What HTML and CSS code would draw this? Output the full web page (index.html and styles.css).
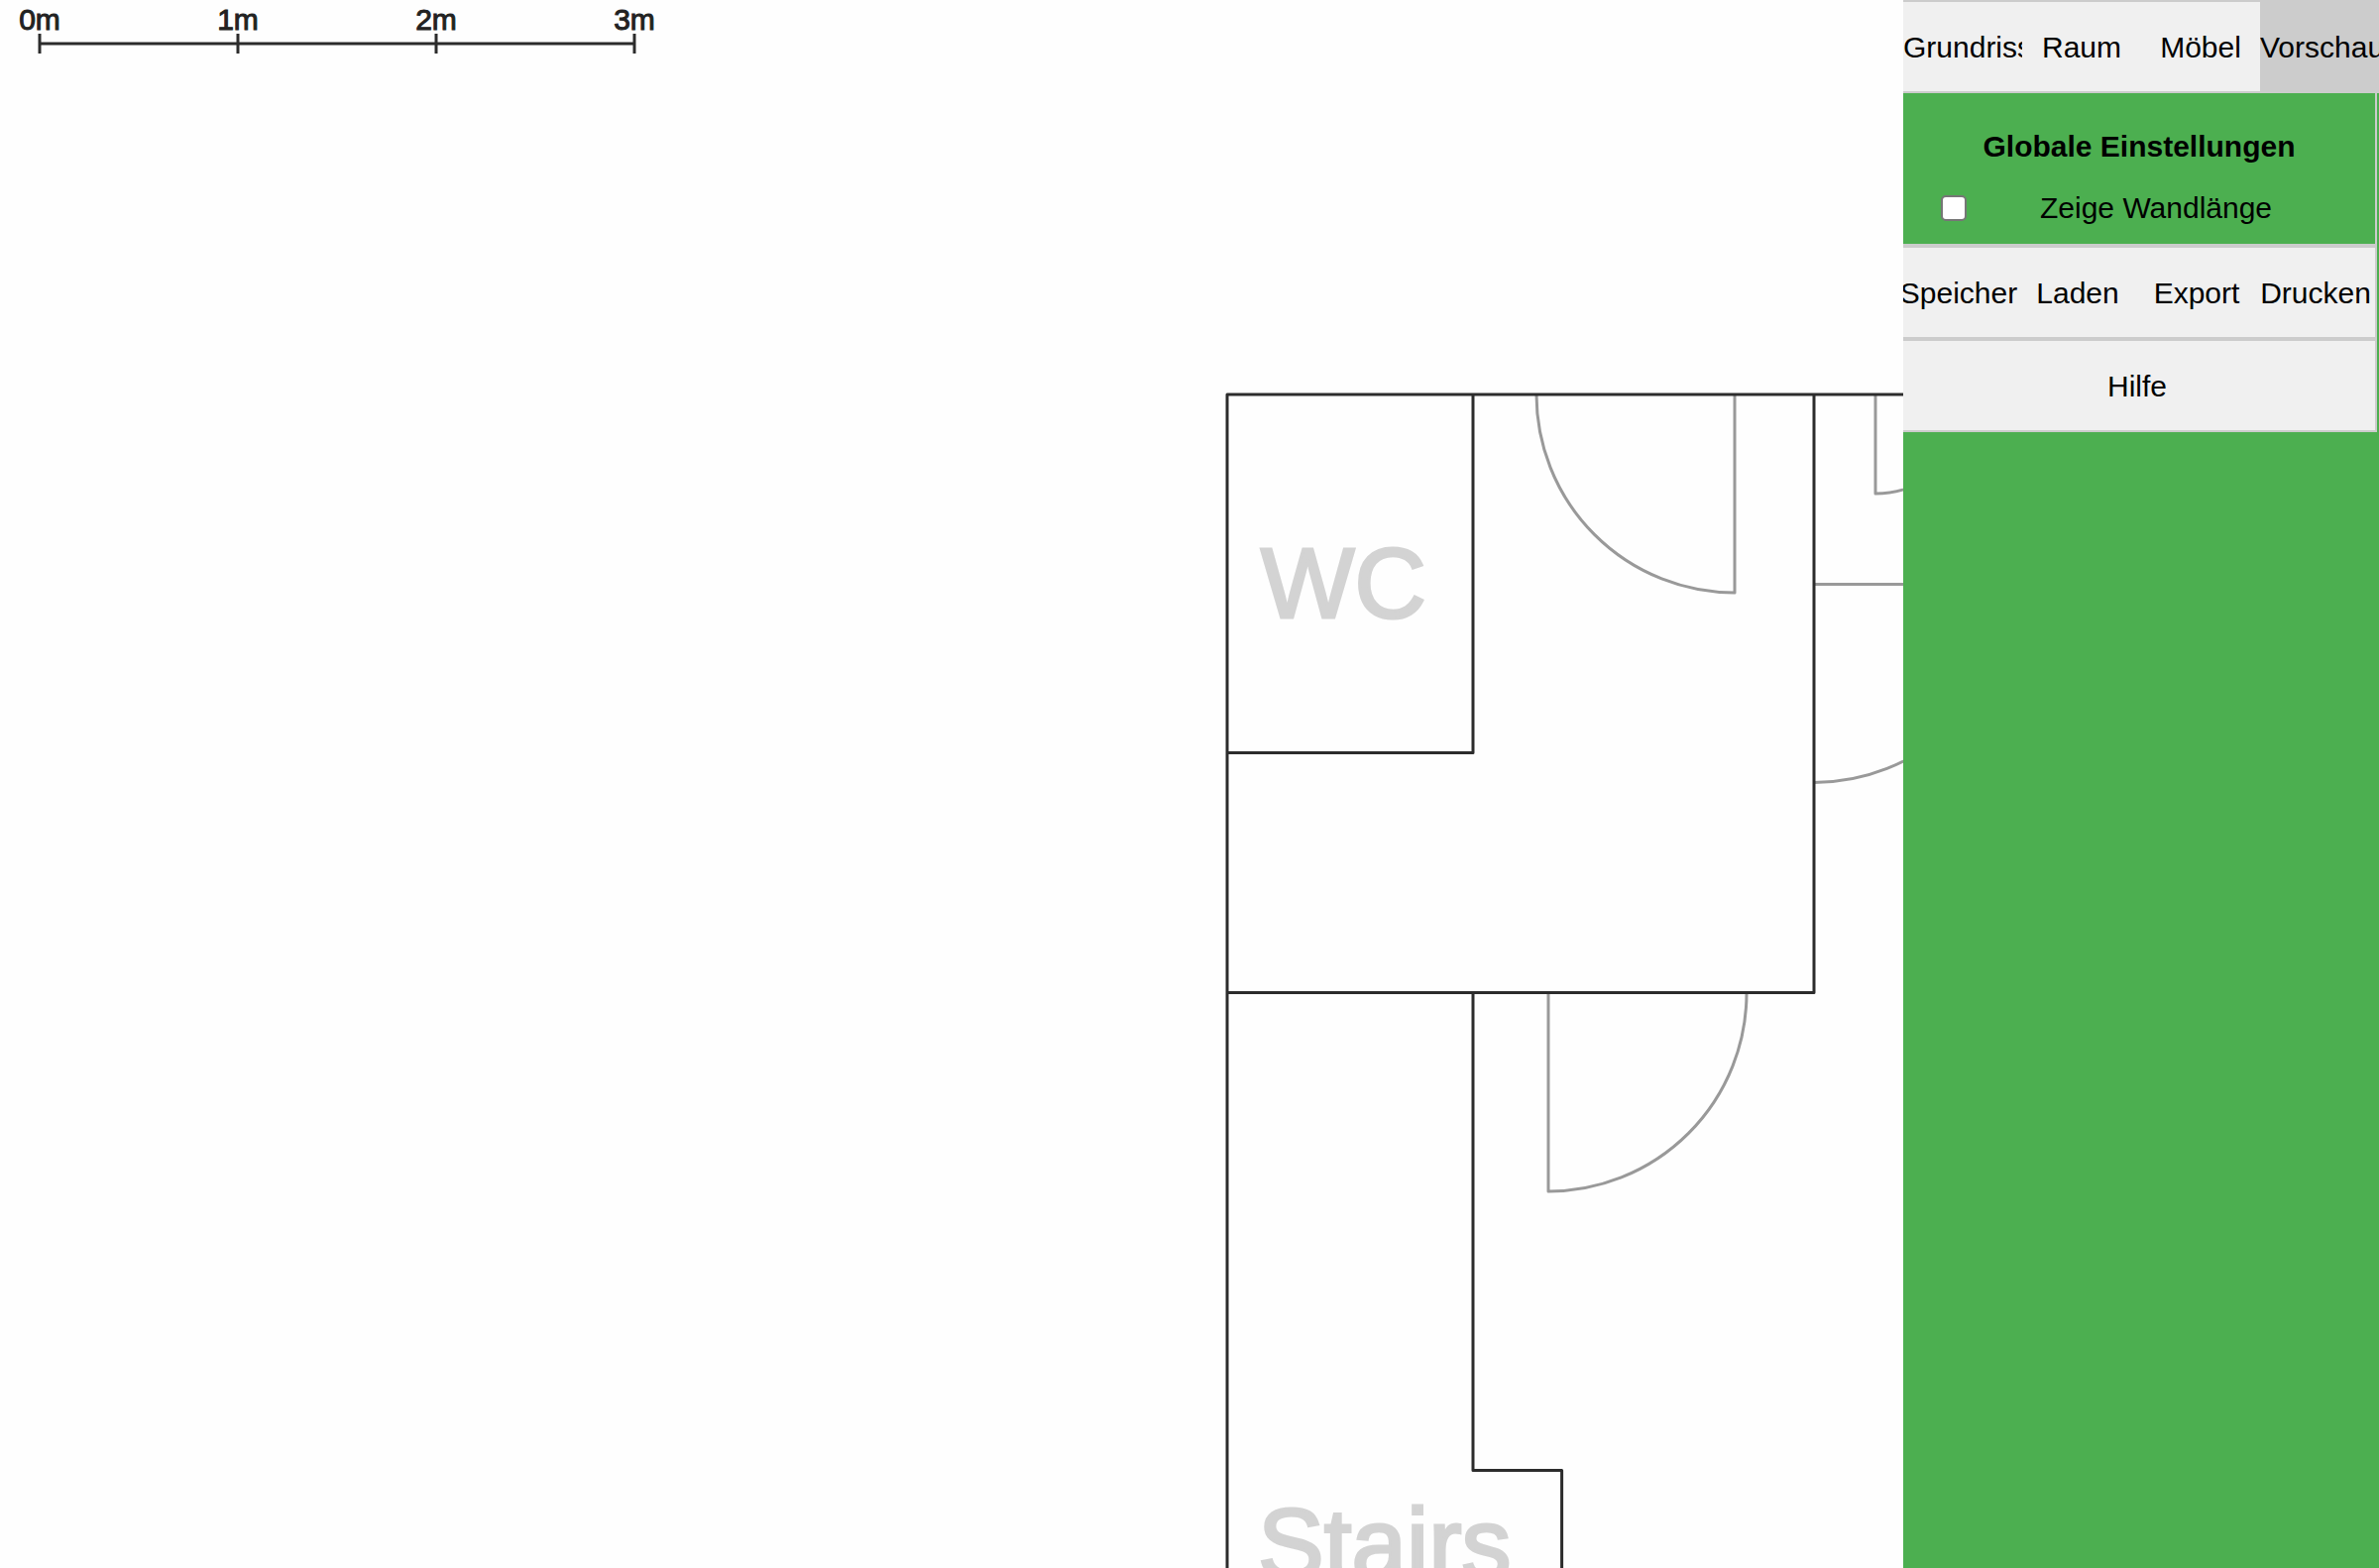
FILE: index.html
```html
<!DOCTYPE html>
<html lang="de">
<head>
<meta charset="utf-8">
<title>Grundriss – Vorschau</title>
<link rel="stylesheet" href="styles.css">
</head>
<body>
<div class="app">
  <main class="stage">
    <svg class="plan" role="img" aria-label="Grundriss">
      <g class="scale">
        <path d="M40 44H640M40 34V54M240 34V54M440 34V54M640 34V54"/>
        <text x="40" y="30">0m</text>
        <text x="240" y="30">1m</text>
        <text x="440" y="30">2m</text>
        <text x="640" y="30">3m</text>
      </g>
      <g class="room-names">
        <text x="1272" y="623">WC</text>
        <text x="1269" y="1592">Stairs</text>
      </g>
      <g class="doors">
        <path d="M1750 398V598A200 200 0 0 1 1550 398"/>
        <path d="M1892 398V498A100 100 0 0 0 1992 398"/>
        <path d="M2030 589.5H1830M1830 789.5A200 200 0 0 0 2030 589.5"/>
        <path d="M1562 1002V1202A200 200 0 0 0 1762 1002"/>
      </g>
      <g class="walls">
        <path d="M2400 398H1238V2000"/>
        <path d="M1486 398V759.5H1238"/>
        <path d="M1830 398V1001.6H1238"/>
        <path d="M1486 1002V1483.6H1575.6V2000"/>
      </g>
    </svg>
  </main>
  <aside class="sidebar">
    <nav class="tabs">
      <button class="tab" type="button">Grundriss</button>
      <button class="tab" type="button">Raum</button>
      <button class="tab" type="button">Möbel</button>
      <button class="tab active" type="button">Vorschau</button>
    </nav>
    <section class="settings">
      <h1 class="title">Globale Einstellungen</h1>
      <div class="option">
        <input class="check" type="checkbox" id="wall-length">
        <label for="wall-length">Zeige Wandlänge</label>
      </div>
    </section>
    <div class="tools">
      <button class="tab" type="button">Speicher</button>
      <button class="tab" type="button">Laden</button>
      <button class="tab" type="button">Export</button>
      <button class="tab" type="button">Drucken</button>
    </div>
    <div class="tools help">
      <button class="tab" type="button">Hilfe</button>
    </div>
  </aside>
</div>
</body>
</html>
```
FILE: styles.css
```css
* { box-sizing: border-box; }

body {
  margin: 0;
  overflow: hidden;
  font-family: Helvetica, "Liberation Sans", Arial, sans-serif;
  font-size: 30px;
  line-height: 36px;
  color: #000;
}

.app {
  display: flex;
  height: 100vh;
}

.stage {
  flex: 4;
  min-width: 0;
  background: #fefefe;
}

.plan {
  display: block;
  width: 100%;
  height: 100%;
  overflow: hidden;
}

.plan path {
  fill: none;
  stroke-width: 3;
  stroke-linejoin: round;
}

.scale path, .walls path { stroke: #2c2c2c; }
.doors path { stroke: #999; }

.scale text {
  fill: #222;
  stroke: #222;
  stroke-width: 1;
  text-anchor: middle;
}

.room-names text {
  fill: #d3d3d3;
  stroke: #d3d3d3;
  stroke-width: 3;
  font-size: 100px;
}

.sidebar {
  flex: 1;
  min-width: 0;
  overflow: hidden;
  background: #4caf50;
}

.tabs, .tools {
  display: grid;
  grid-template-columns: repeat(4, 1fr);
  border: 2px solid #ccc;
  border-width: 2px 0;
  background: #f0f0f0;
}

.tools {
  margin-left: -4px;
  margin-right: 2px;
  border-right-width: 2px;
}

.help { grid-template-columns: 1fr; }

.tab {
  min-width: 0;
  height: 90px;
  padding: 2px 0 0;
  border: 0;
  overflow: hidden;
  background: none;
  color: inherit;
  font: inherit;
  white-space: nowrap;
  cursor: pointer;
}

.tab:hover { background: #ddd; }
.tab.active { background: #ccc; }

.settings {
  margin-right: 2px;
  padding: 36px 0 18px;
  border: 2px solid #ccc;
  border-width: 0 2px 2px 0;
}

.title {
  margin: 0 0 26px;
  font-size: 30px;
  line-height: 36px;
  text-align: center;
}

.option {
  display: flex;
  align-items: center;
  gap: 74px;
  padding-left: 38px;
}

.check {
  appearance: none;
  width: 26px;
  height: 26px;
  margin: 0;
  border: 2px solid #767676;
  border-radius: 5px;
  background: #fff;
}

.check:checked { background: #0075ff; }
```
